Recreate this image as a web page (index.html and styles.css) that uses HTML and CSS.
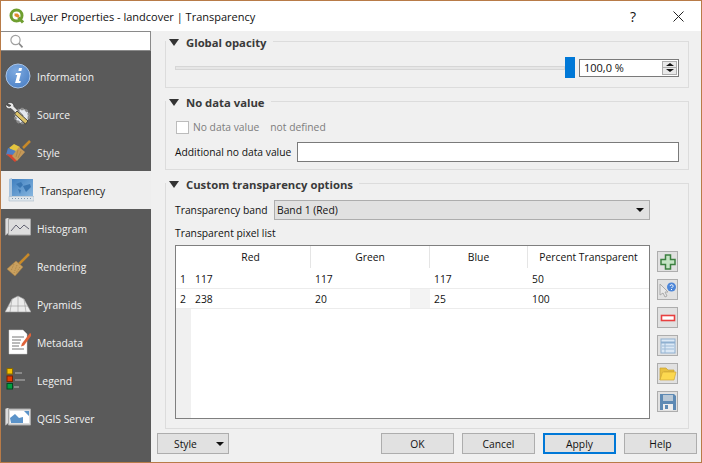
FILE: index.html
```html
<!DOCTYPE html>
<html lang="en">
<head>
    <meta charset="UTF-8">
    <title>Layer Properties - landcover | Transparency</title>
    <link rel="stylesheet" href="styles.css">
</head>
<body>
<div class="window">
    <div class="titlebar">
        <svg class="logo" width="16" height="16" viewBox="0 0 16 16">
            <circle cx="7.500" cy="7.500" r="5.500" fill="#fff" stroke="#6f9f30" stroke-width="3"/>
            <path d="M9.500 9.500l4.500 5" stroke="#6f9f30" stroke-width="3"/>
            <path d="M5.500 5.500h3l2 2-1 2.500-4-2z" fill="#e08a2c"/>
        </svg>
        <span class="title">Layer Properties - landcover | Transparency</span>
        <span class="help-mark">?</span>
        <svg class="close" width="11" height="11" viewBox="0 0 11 11"><path d="M.5.5l10 10M10.500.5l-10 10" stroke="#222" stroke-width="1" fill="none"/></svg>
    </div>
    <div class="main">
        <div class="sidebar">
            <div class="search">
                <svg width="14" height="14" viewBox="0 0 14 14"><circle cx="5.500" cy="6" r="4.600" fill="none" stroke="#a0a0a0" stroke-width="1.200"/><path d="M9 9.500l3.500 3.800" stroke="#888" stroke-width="1.700"/></svg>
            </div>
            <ul class="menu">
                <li>
                    <svg width="26" height="26" viewBox="0 0 26 26">
                        <defs><radialGradient id="infoBlue" cx=".4" cy=".3" r=".8"><stop offset="0" stop-color="#7eaae0"/><stop offset="1" stop-color="#4a7fc4"/></radialGradient></defs>
                        <circle cx="13" cy="13" r="12" fill="url(#infoBlue)" stroke="#a9c4e6"/>
                        <path d="M11 10h5l-2 8h1.800l-.5 2h-5.300l.5-1.500 1.700-6.500h-1.700zM14 5h3l-.6 3h-3z" fill="#fff"/>
                    </svg>
                    <span>Information</span>
                </li>
                <li>
                    <svg width="26" height="26" viewBox="0 0 26 26"><circle cx="17" cy="15" r="7" fill="#e4e8ee" stroke="#8a8a8a" stroke-width="2.400" stroke-dasharray="3 1.500"/><path d="M2 2.500c3-2 7-1 7 3l9 9-3 2-9-9c-3 1-6-1-5-4l3 2 2-1z" fill="#e8e8e8" stroke="#333" stroke-width=".7"/><path d="M12 10l11 10-2.500 3-11-10z" fill="#dcc268" stroke="#333" stroke-width=".9"/></svg>
                    <span>Source</span>
                </li>
                <li>
                    <svg width="26" height="26" viewBox="0 0 26 26"><path d="M25 2l-7 7" stroke="#c88a2a" stroke-width="2.500"/><path d="M4 9l5-4 6 3-4 6z" fill="#e4c53f"/><path d="M3 9l8 3-3 5-7-1z" fill="#4f7fc4"/><path d="M1 15l8 1 4 4-3 3z" fill="#d8452f"/><path d="M14 8l6 5-8 9-5-5z" fill="#c59858"/><path d="M13 11l-2 7M16 12l-3 7" stroke="#a87f3f" stroke-width=".7"/></svg>
                    <span>Style</span>
                </li>
                <li class="active">
                    <svg width="26" height="24" viewBox="0 0 26 24"><defs><linearGradient id="mapBlue" x1="0" y1="0" x2="1" y2="1"><stop offset="0" stop-color="#3f7fc0"/><stop offset="1" stop-color="#86b5de"/></linearGradient></defs><path d="M4 1h21v17H4z" fill="url(#mapBlue)"/><path d="M8 6l5-2 2 3-3 3zM15 8l7-2 1 3-5 5zM10 11l3 1-1 4z" fill="#3a76b2"/><path d="M1 1l3-1v19H1z" fill="#a9c4de"/><path d="M1 18.500h25v4.500H1z" fill="#dfe6ec" stroke="#9fb0c0" stroke-width=".5"/><path d="M4 20.500h20" stroke="#7f96ad" stroke-dasharray="1 2"/></svg>
                    <span>Transparency</span>
                </li>
                <li>
                    <svg width="26" height="20" viewBox="0 2 26 20"><path d="M.5 3l3-2v16l-3 2zM3.500 3h22v16h-22z" fill="#ddd" stroke="#aaa"/><path d="M6 15l5-6 4 4 4-4 5 4" fill="none" stroke="#556" stroke-width=".9"/></svg>
                    <span>Histogram</span>
                </li>
                <li>
                    <svg width="26" height="26" viewBox="0 0 26 26"><path d="M24 1l-10 10" stroke="#c88a2a" stroke-width="2.500"/><path d="M11 8l7 6-8 9-8-7z" fill="#c9a05f" stroke="#a87f3f" stroke-width=".5"/><path d="M9 11l-3 7M12 12l-3 8M15 14l-4 6" stroke="#a87f3f" stroke-width=".7" stroke-dasharray="1.500 1"/></svg>
                    <span>Rendering</span>
                </li>
                <li>
                    <svg width="26" height="20" viewBox="0 0 26 20"><path d="M0 18L7 5l6-3 6 3 7 13z" fill="#ebebeb" stroke="#999" stroke-width=".6"/><path d="M13 2v16M7 5l-2 13M19 5l2 13M3 12h20" stroke="#999" stroke-width=".6"/></svg>
                    <span>Pyramids</span>
                </li>
                <li>
                    <svg width="26" height="26" viewBox="-3 0 26 26"><path d="M1 1h14l4 4v20H1z" fill="#fff" stroke="#ccc" stroke-width=".5"/><path d="M4 8h12M4 11h9M4 14h8M4 17h7M4 20h12" stroke="#777"/><path d="M22 4l2 1.500-8 11-3 1 1-3z" fill="#e0633a"/></svg>
                    <span>Metadata</span>
                </li>
                <li>
                    <svg width="26" height="24" viewBox="-1 0 26 24"><rect x="1" y=".5" width="5.500" height="5.500" fill="#f5c000" stroke="#8a6a00"/><rect x="1" y="8" width="5.500" height="5.500" fill="#e83c00" stroke="#7a2000"/><rect x="1" y="15.500" width="5.500" height="5.500" fill="#00a040" stroke="#004a20"/><path d="M9 5h7M9 12h10M8 19h5" stroke="#999" stroke-width="1.500"/></svg>
                    <span>Legend</span>
                </li>
                <li>
                    <svg width="26" height="20" viewBox="0 2 26 20"><path d="M.5 3l3-2v16l-3 2zM3.500 3h22v16h-22z" fill="#ddd" stroke="#aaa"/><path d="M5 5h19v12H5z" fill="#fff"/><path d="M5 12l5-4 4 4 4-1v6H6zM19 5h5v5z" fill="#5b93c9"/></svg>
                    <span>QGIS Server</span>
                </li>
            </ul>
        </div>
        <div class="content">
            <div class="pages">
                <div class="group group-opacity">
                    <div class="group-title"><i class="arrow"></i>Global opacity</div>
                    <div class="opacity-row">
                        <div class="slider"><div class="slider-line"></div><div class="slider-handle"></div></div>
                        <div class="spinbox">
                            <span class="spin-value">100,0 %</span>
                            <div class="spin-buttons"><b class="up"></b><b class="down"></b></div>
                        </div>
                    </div>
                </div>
                <div class="group group-nodata">
                    <div class="group-title"><i class="arrow"></i>No data value</div>
                    <div class="nodata-row">
                        <span class="checkbox"></span>
                        <span class="muted">No data value</span>
                        <span class="muted">not defined</span>
                    </div>
                    <div class="additional-row">
                        <span class="additional-label">Additional no data value</span>
                        <div class="textbox"></div>
                    </div>
                </div>
                <div class="group group-custom">
                    <div class="group-title"><i class="arrow"></i>Custom transparency options</div>
                    <div class="band-row">
                        <span>Transparency band</span>
                        <div class="combo">Band 1 (Red)<i class="combo-arrow"></i></div>
                    </div>
                    <div class="list-label">Transparent pixel list</div>
                    <div class="table-row">
                        <div class="table">
                            <div class="thead">
                                <div class="corner"></div>
                                <div class="col-a">Red</div>
                                <div class="col-b">Green</div>
                                <div class="col-c">Blue</div>
                                <div class="col-d">Percent Transparent</div>
                            </div>
                            <div class="row">
                                <div class="num">1</div>
                                <div class="col-a">117</div>
                                <div class="col-b">117</div>
                                <div class="col-c">117</div>
                                <div class="col-d">50</div>
                            </div>
                            <div class="row">
                                <div class="num">2</div>
                                <div class="col-a">238</div>
                                <div class="col-b col-split"><span>20</span><em></em></div>
                                <div class="col-c">25</div>
                                <div class="col-d">100</div>
                            </div>
                            <div class="filler"><div class="gutter"></div></div>
                        </div>
                        <div class="tools">
                            <button class="tool"><svg width="16" height="16" viewBox="0 0 16 16"><path d="M5.500 1h5v4.500H15v5h-4.500V15h-5v-4.500H1v-5h4.500z" fill="#c5e4c5" stroke="#3c8040" stroke-width="1.500"/></svg></button>
                            <button class="tool"><svg width="18" height="16" viewBox="0 0 18 16"><path d="M1 2l0 11 3-2 2 4 2-1-2-4h3z" fill="#e8e8e8" stroke="#aaa"/><circle cx="12.500" cy="5" r="4.500" fill="#4d86d8"/><path d="M11 4c.5-2 3.500-1.500 3 .5l-1.500 1.500M12.500 7v1" stroke="#fff" fill="none"/></svg></button>
                            <button class="tool"><svg width="16" height="8" viewBox="0 0 16 8"><rect x="1.500" y="1.500" width="13" height="5" fill="#fff" stroke="#e84040" stroke-width="1.600"/></svg></button>
                            <button class="tool"><svg width="16" height="16" viewBox="0 0 16 16"><rect x="1" y="1" width="14" height="14" fill="#dbe8f5" stroke="#8fb0d0"/><path d="M1 4.500h14" stroke="#8fb0d0" stroke-width="2"/><path d="M5 5v10M2 8h12M2 11h12" stroke="#9dbad6"/></svg></button>
                            <button class="tool"><svg width="18" height="15" viewBox="0 0 18 15"><path d="M1 14V2h6l2 2h6v2H5z" fill="#e8c040" stroke="#c8a030" stroke-width=".7"/><path d="M3.500 6H17l-2 8H1z" fill="#fcd84f" stroke="#d0a838" stroke-width=".7"/></svg></button>
                            <button class="tool"><svg width="16" height="16" viewBox="0 0 16 16"><path d="M0 0h14l2 2v14H0z" fill="#5e8ab4"/><rect x="3" y="1" width="10" height="6" fill="#b9c8d6"/><rect x="3" y="10" width="10" height="6" fill="#eee"/><rect x="5" y="11" width="3" height="4" fill="#5e8ab4"/></svg></button>
                        </div>
                    </div>
                </div>
            </div>
            <div class="footer">
                <button class="btn btn-style">Style<i class="btn-arrow"></i></button>
                <div class="footer-right">
                    <button class="btn">OK</button>
                    <button class="btn">Cancel</button>
                    <button class="btn btn-default">Apply</button>
                    <button class="btn">Help</button>
                </div>
            </div>
        </div>
    </div>
</div>
</body>
</html>
```

FILE: styles.css
```css
* {
    box-sizing: border-box;
}
html, body {
    margin: 0;
    padding: 0;
}
body {
    font-family: "Open Sans", "Noto Sans", sans-serif;
    font-size: 10.3px;
    color: #111;
}
.window {
    width: 702px;
    height: 463px;
    border: 1px solid #b87b48;
    display: flex;
    flex-direction: column;
    background: #f0f0f0;
    overflow: hidden;
}
.titlebar {
    height: 30px;
    flex: none;
    background: #fff;
    display: flex;
    align-items: center;
    padding-left: 8px;
    font-size: 11px;
}
.title {
    margin-left: 5px;
    flex: 1;
}
.help-mark {
    font-size: 14px;
    width: 12px;
    margin-right: 31px;
}
.close {
    margin-right: 17px;
}
.main {
    flex: 1;
    display: flex;
    min-height: 0;
}
.sidebar {
    width: 150px;
    flex: none;
    background: #5a5a5a;
}
.search {
    height: 20px;
    background: #fff;
    border: 1px solid #8a8a8a;
    border-left: 0;
    padding: 2px 0 0 9px;
}
.menu {
    list-style: none;
    margin: 6px 0 0;
    padding: 0;
}
.menu li {
    height: 38px;
    display: flex;
    align-items: center;
    padding-left: 4px;
    color: #f2f2f2;
}
.menu li svg {
    width: 26px;
    flex: none;
}
.menu li span {
    margin: 2px 0 0 6px;
}
.menu li.active {
    background: #eee;
    color: #222;
    padding-left: 7px;
}
.content {
    flex: 1;
    display: flex;
    flex-direction: column;
    min-width: 0;
}
.pages {
    flex: 1;
    padding: 10px 12px 0 14px;
}
.group {
    border: 1px solid #dcdcdc;
    margin-bottom: 13px;
    padding: 0 9px;
}
.group-opacity {
    height: 47px;
}
.group-nodata {
    height: 69px;
}
.group-custom {
    height: 246px;
    margin-bottom: 0;
}
.group-title {
    display: flex;
    align-items: center;
    width: fit-content;
    height: 14px;
    margin: -7px 0 0 -9px;
    background: #f0f0f0;
    padding: 0 6px 0 3px;
    font-size: 11.3px;
    font-weight: 700;
    color: #3a3a3a;
}
.arrow {
    width: 0;
    height: 0;
    border-left: 5.500px solid transparent;
    border-right: 5.500px solid transparent;
    border-top: 7px solid #333;
    margin-right: 7px;
}
.opacity-row {
    display: flex;
    align-items: center;
    margin-top: 8px;
}
.slider {
    width: 400px;
    height: 21px;
    display: flex;
    align-items: center;
    flex: none;
}
.slider-line {
    flex: 1;
    height: 4px;
    background: #e6e6e6;
    border: 1px solid #d6d6d6;
}
.slider-handle {
    width: 10px;
    height: 21px;
    background: #0078d7;
}
.spinbox {
    width: 100px;
    height: 18px;
    margin-left: 4px;
    background: #fff;
    border: 1px solid #7a7a7a;
    display: flex;
    align-items: center;
    padding-left: 4px;
    font-size: 11px;
}
.spin-value {
    flex: 1;
}
.spin-buttons {
    width: 15px;
    height: 14px;
    margin-right: 1px;
    display: flex;
    flex-direction: column;
    background: #e9e9e9;
    border: 1px solid #adadad;
}
.spin-buttons b {
    flex: 1;
    display: flex;
    align-items: center;
    justify-content: center;
}
.spin-buttons b:after {
    content: "";
    border-left: 4px solid transparent;
    border-right: 4px solid transparent;
}
.spin-buttons .up {
    border-bottom: 1px solid #adadad;
}
.spin-buttons .up:after {
    border-bottom: 3px solid #111;
}
.spin-buttons .down:after {
    border-top: 3px solid #111;
}
.nodata-row {
    display: flex;
    align-items: center;
    height: 16px;
    margin-top: 10px;
    padding-left: 1px;
    color: #7d7d7d;
}
.checkbox {
    width: 13px;
    height: 13px;
    background: #fff;
    border: 1px solid #bcbcbc;
    margin-right: 4px;
}
.muted {
    margin-right: 11px;
}
.additional-row {
    display: flex;
    align-items: center;
    margin-top: 7px;
}
.additional-label {
    width: 122px;
    flex: none;
    white-space: nowrap;
}
.textbox {
    width: 382px;
    height: 20px;
    background: #fff;
    border: 1px solid #7a7a7a;
}
.band-row {
    display: flex;
    align-items: center;
    margin-top: 9px;
}
.band-row span {
    width: 99px;
    flex: none;
}
.combo {
    width: 376px;
    height: 20px;
    background: #e1e1e1;
    border: 1px solid #adadad;
    display: flex;
    align-items: center;
    justify-content: space-between;
    padding: 0 5px 0 2px;
}
.combo-arrow {
    border-left: 4px solid transparent;
    border-right: 4px solid transparent;
    border-top: 4px solid #111;
}
.list-label {
    margin-top: 5px;
    height: 16px;
    line-height: 16px;
}
.table-row {
    display: flex;
    margin-top: 4px;
}
.table {
    width: 475px;
    height: 174px;
    flex: none;
    background: #fff;
    border: 1px solid #7f7f7f;
    display: flex;
    flex-direction: column;
}
.thead, .row {
    display: flex;
    flex: none;
}
.thead {
    height: 23px;
    padding-bottom: 1px;
    text-align: center;
}
.thead > div {
    display: flex;
    align-items: center;
    justify-content: center;
    border-right: 1px solid #e5e5e5;
}
.thead > div:last-child {
    border-right: 0;
}
.row {
    height: 20px;
    border-bottom: 1px solid #ececec;
}
.row > div {
    display: flex;
    align-items: center;
    padding-left: 4px;
}
.corner, .num {
    width: 15px;
    flex: none;
    background: #f0f0f0;
}
.thead .corner {
    background: #fff;
    border-right: 0;
}
.row .num {
    background: #fff;
    justify-content: flex-start;
}
.col-a {
    width: 120px;
}
.col-b {
    width: 119px;
}
.col-c {
    width: 98px;
}
.col-d {
    flex: 1;
}
.row .col-split {
    padding: 0;
    justify-content: space-between;
}
.col-split span {
    padding-left: 4px;
}
.col-split em {
    width: 20px;
    height: 19px;
    background: #f3f3f3;
}
.filler {
    flex: 1;
    display: flex;
}
.gutter {
    width: 15px;
    background: #f0f0f0;
}
.tools {
    margin-left: 7px;
    padding-top: 6px;
    display: flex;
    flex-direction: column;
    gap: 7px;
}
.tool {
    width: 21px;
    height: 21px;
    padding: 0;
    background: #e1e1e1;
    border: 1px solid #adadad;
    display: flex;
    align-items: center;
    justify-content: center;
}
.footer {
    flex: none;
    height: 25px;
    margin-bottom: 4px;
    padding: 0 4px 0 6px;
    display: flex;
    align-items: flex-start;
    justify-content: space-between;
}
.footer-right {
    display: flex;
    gap: 8px;
}
.btn {
    width: 73px;
    height: 21px;
    padding: 0;
    background: #e1e1e1;
    border: 1px solid #adadad;
    font: inherit;
    color: #111;
}
.btn-default {
    border: 2px solid #0078d7;
}
.btn-style {
    width: 72px;
    display: flex;
    align-items: center;
    justify-content: space-between;
    padding: 0 4px 0 16px;
}
.btn-arrow {
    border-left: 4px solid transparent;
    border-right: 4px solid transparent;
    border-top: 4px solid #111;
}
```
